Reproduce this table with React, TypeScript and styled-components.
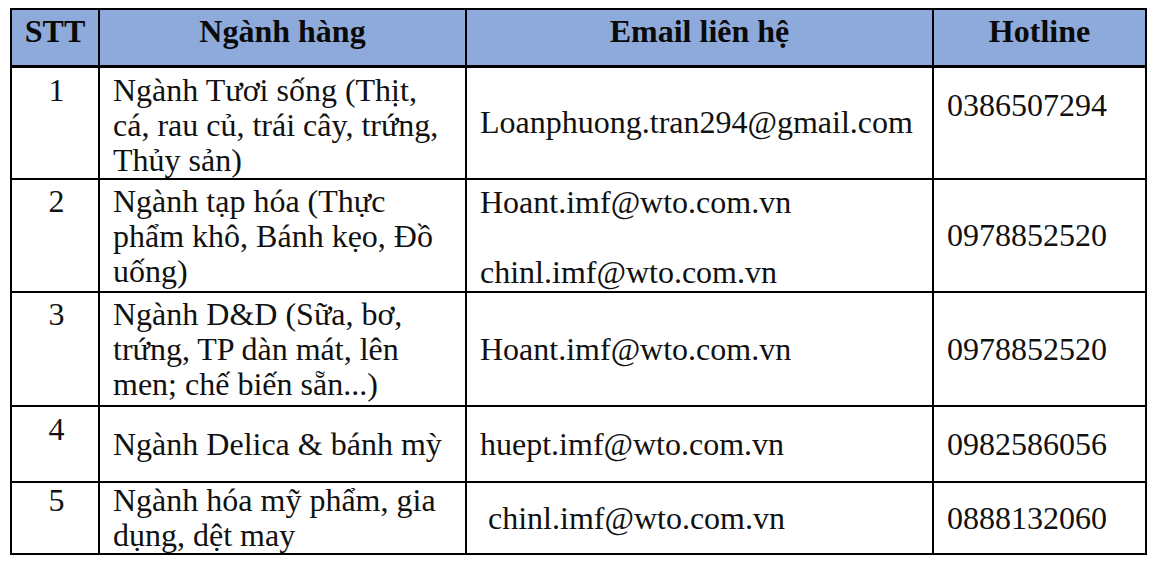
import React from "react";
import styled, { createGlobalStyle } from "styled-components";

const GlobalStyle = createGlobalStyle`
  html, body {
    margin: 0;
    padding: 0;
    background: #ffffff;
  }
  body {
    font-family: "Liberation Serif", "Times New Roman", serif;
    color: #111111;
  }
`;

const Page = styled.div`
  padding: 8px 0 0 10px;
`;

const ContactTable = styled.table`
  width: 1135px;
  table-layout: fixed;
  border-collapse: collapse;
  border: 2px solid #000;
  font-size: 32px;
  line-height: 35px;
`;

const HeadRow = styled.tr`
  height: 57px;
  background: #8eaadb;
  border-bottom: 3px solid #000;
`;

const HeadCell = styled.th`
  border: 2px solid #000;
  font-weight: 700;
  text-align: center;
  vertical-align: middle;
  padding: 0 8px 12px;
  color: #0a0a0a;
`;

const BodyRow = styled.tr<{ $h: number }>`
  height: ${(p) => p.$h}px;
`;

type VAlign = "top" | "middle";

const Cell = styled.td<{ $align?: VAlign; $padTop?: number; $center?: boolean }>`
  border: 2px solid #000;
  vertical-align: ${(p) => p.$align ?? "middle"};
  padding: ${(p) => p.$padTop ?? 0}px 10px 0 13px;
  text-align: ${(p) => (p.$center ? "center" : "left")};
  white-space: pre-line;
`;

const StackedEmail = styled.div`
  display: flex;
  flex-direction: column;
  gap: 35px;
`;

type Row = {
  stt: string;
  h: number;
  sttPad: number;
  nganh: string;
  nganhAlign: VAlign;
  nganhPad: number;
  emails: string[];
  emailAlign: VAlign;
  emailPad: number;
  hotline: string;
  hotAlign: VAlign;
  hotPad: number;
};

const rows: Row[] = [
  {
    stt: "1",
    h: 113,
    sttPad: 5,
    nganh: "Ngành Tươi sống (Thịt,\ncá, rau củ, trái cây, trứng,\nThủy sản)",
    nganhAlign: "top",
    nganhPad: 5,
    emails: ["Loanphuong.tran294@gmail.com"],
    emailAlign: "middle",
    emailPad: 0,
    hotline: "0386507294",
    hotAlign: "top",
    hotPad: 20,
  },
  {
    stt: "2",
    h: 113,
    sttPad: 4,
    nganh: "Ngành tạp hóa (Thực\nphẩm khô, Bánh kẹo, Đồ\nuống)",
    nganhAlign: "top",
    nganhPad: 4,
    emails: ["Hoant.imf@wto.com.vn", "chinl.imf@wto.com.vn"],
    emailAlign: "top",
    emailPad: 5,
    hotline: "0978852520",
    hotAlign: "middle",
    hotPad: 0,
  },
  {
    stt: "3",
    h: 114,
    sttPad: 4,
    nganh: "Ngành D&D (Sữa, bơ,\ntrứng, TP dàn mát, lên\nmen; chế biến sẵn...)",
    nganhAlign: "top",
    nganhPad: 4,
    emails: ["Hoant.imf@wto.com.vn"],
    emailAlign: "middle",
    emailPad: 0,
    hotline: "0978852520",
    hotAlign: "middle",
    hotPad: 0,
  },
  {
    stt: "4",
    h: 76,
    sttPad: 5,
    nganh: "Ngành Delica & bánh mỳ",
    nganhAlign: "middle",
    nganhPad: 0,
    emails: ["huept.imf@wto.com.vn"],
    emailAlign: "middle",
    emailPad: 0,
    hotline: "0982586056",
    hotAlign: "middle",
    hotPad: 0,
  },
  {
    stt: "5",
    h: 70,
    sttPad: 0,
    nganh: "Ngành hóa mỹ phẩm, gia\ndụng, dệt may",
    nganhAlign: "top",
    nganhPad: 0,
    emails: ["\u00a0chinl.imf@wto.com.vn"],
    emailAlign: "middle",
    emailPad: 0,
    hotline: "0888132060",
    hotAlign: "middle",
    hotPad: 0,
  },
];

export default function App() {
  return (
    <Page>
      <GlobalStyle />
      <ContactTable>
        <colgroup>
          <col style={{ width: 88 }} />
          <col style={{ width: 367 }} />
          <col style={{ width: 467 }} />
          <col style={{ width: 213 }} />
        </colgroup>
        <thead>
          <HeadRow>
            <HeadCell>STT</HeadCell>
            <HeadCell>Ngành hàng</HeadCell>
            <HeadCell>Email liên hệ</HeadCell>
            <HeadCell>Hotline</HeadCell>
          </HeadRow>
        </thead>
        <tbody>
          {rows.map((r) => (
            <BodyRow key={r.stt} $h={r.h}>
              <Cell $align="top" $padTop={r.sttPad} $center>
                {r.stt}
              </Cell>
              <Cell $align={r.nganhAlign} $padTop={r.nganhPad}>
                {r.nganh}
              </Cell>
              <Cell $align={r.emailAlign} $padTop={r.emailPad}>
                {r.emails.length > 1 ? (
                  <StackedEmail>
                    {r.emails.map((e) => (
                      <span key={e}>{e}</span>
                    ))}
                  </StackedEmail>
                ) : (
                  r.emails[0]
                )}
              </Cell>
              <Cell $align={r.hotAlign} $padTop={r.hotPad}>
                {r.hotline}
              </Cell>
            </BodyRow>
          ))}
        </tbody>
      </ContactTable>
    </Page>
  );
}
